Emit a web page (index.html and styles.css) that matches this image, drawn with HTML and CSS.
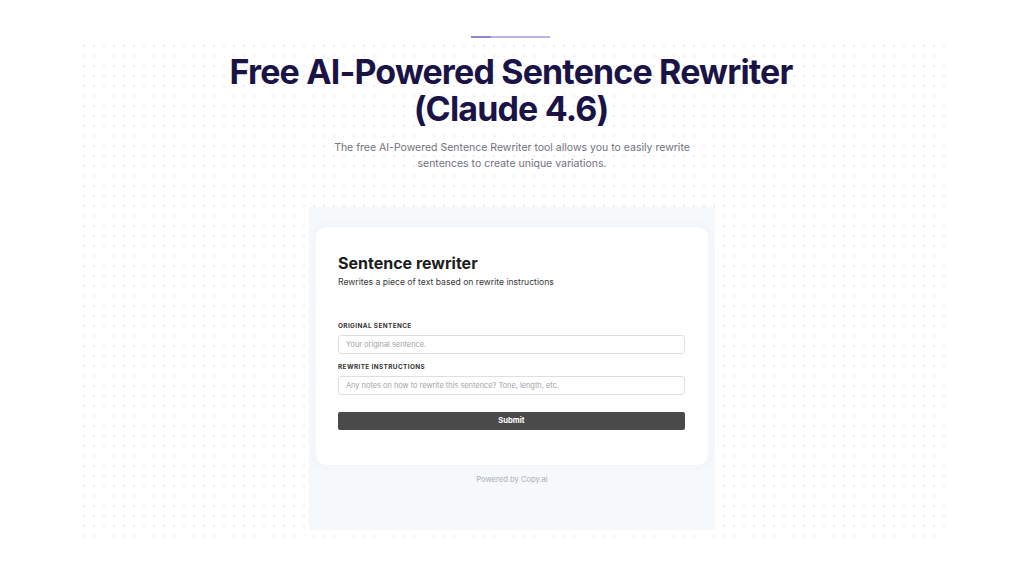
FILE: index.html
```html
<!DOCTYPE html>
<html lang="en">
<head>
<meta charset="utf-8">
<title>Free AI-Powered Sentence Rewriter</title>
<link rel="stylesheet" href="styles.css">
</head>
<body>
<div class="page">
  <div class="accent-line"></div>
  <section class="hero">
    <h1 class="title">Free AI-Powered Sentence Rewriter<br>(Claude 4.6)</h1>
    <p class="lead">The free AI-Powered Sentence Rewriter tool allows you to easily rewrite<br>sentences to create unique variations.</p>
    <div class="tool-frame">
      <div class="tool-card">
        <h2 class="tool-title">Sentence rewriter</h2>
        <p class="tool-sub">Rewrites a piece of text based on rewrite instructions</p>
        <label class="field-label first">ORIGINAL SENTENCE</label>
        <div class="field">Your original sentence.</div>
        <label class="field-label">REWRITE INSTRUCTIONS</label>
        <div class="field">Any notes on how to rewrite this sentence? Tone, length, etc.</div>
        <div class="submit">Submit</div>
      </div>
      <p class="powered">Powered by Copy.ai</p>
    </div>
  </section>
</div>
</body>
</html>
```
FILE: styles.css
```css
* { box-sizing: border-box; }
html, body { margin: 0; padding: 0; background: #ffffff; }
body { font-family: "Inter", "Liberation Sans", sans-serif; }
.page {
  width: 1024px;
  height: 576px;
  display: flex;
  flex-direction: column;
  align-items: center;
  overflow: hidden;
}
.accent-line {
  margin-top: 36px;
  margin-left: -3px;
  width: 79px;
  height: 1.5px;
  background: linear-gradient(90deg, #8f86d4 0%, #8f86d4 25%, #b9b4e2 25%, #b9b4e2 100%);
  flex-shrink: 0;
}
.hero {
  width: 872px;
  padding: 15px 0 10px;
  display: flex;
  flex-direction: column;
  align-items: center;
  background-image: radial-gradient(circle, #efeff2 0.9px, transparent 1.2px);
  background-size: 10px 10px;
  background-position: 3px 3px;
}
.title {
  margin: 0 0 0 -2px;
  font-size: 34px;
  line-height: 37px;
  font-weight: 700;
  color: #1a1446;
  text-align: center;
  letter-spacing: -0.85px;
}
.lead {
  margin: 13px 0 0;
  font-size: 10.5px;
  line-height: 16px;
  color: #72737c;
  text-align: center;
}
.tool-frame {
  margin-top: 35px;
  width: 406px;
  height: 323px;
  background: #f6f9fb;
  padding: 20px 7px 0;
  display: flex;
  flex-direction: column;
  align-items: stretch;
}
.tool-card {
  background: #ffffff;
  border-radius: 10px;
  box-shadow: 0 0 8px rgba(230, 236, 240, 0.6);
  padding: 26px 23px 35px 22px;
  display: flex;
  flex-direction: column;
}
.tool-title {
  margin: 0;
  font-size: 16px;
  line-height: 20px;
  font-weight: 650;
  color: #1c1c1c;
}
.tool-sub {
  margin: 3px 0 0;
  font-size: 8.6px;
  line-height: 12px;
  color: #383838;
}
.field-label {
  display: block;
  margin-top: 8px;
  font-size: 6.4px;
  line-height: 10px;
  font-weight: 700;
  color: #333333;
  letter-spacing: 0.4px;
}
.field-label.first { margin-top: 33px; }
.field {
  margin-top: 4px;
  height: 19px;
  border: 1px solid #dedfe2;
  border-radius: 3px;
  padding: 0 7px;
  font-size: 7.4px;
  line-height: 17px;
  color: #a0a3a8;
}
.submit {
  margin-top: 17px;
  height: 18px;
  background: #4a4a4a;
  border-radius: 2px;
  color: #ffffff;
  font-size: 7.6px;
  font-weight: 700;
  line-height: 18px;
  text-align: center;
}
.powered {
  margin: 9px 0 0;
  font-size: 7.6px;
  line-height: 12px;
  color: #a9adb6;
  text-align: center;
}
```
